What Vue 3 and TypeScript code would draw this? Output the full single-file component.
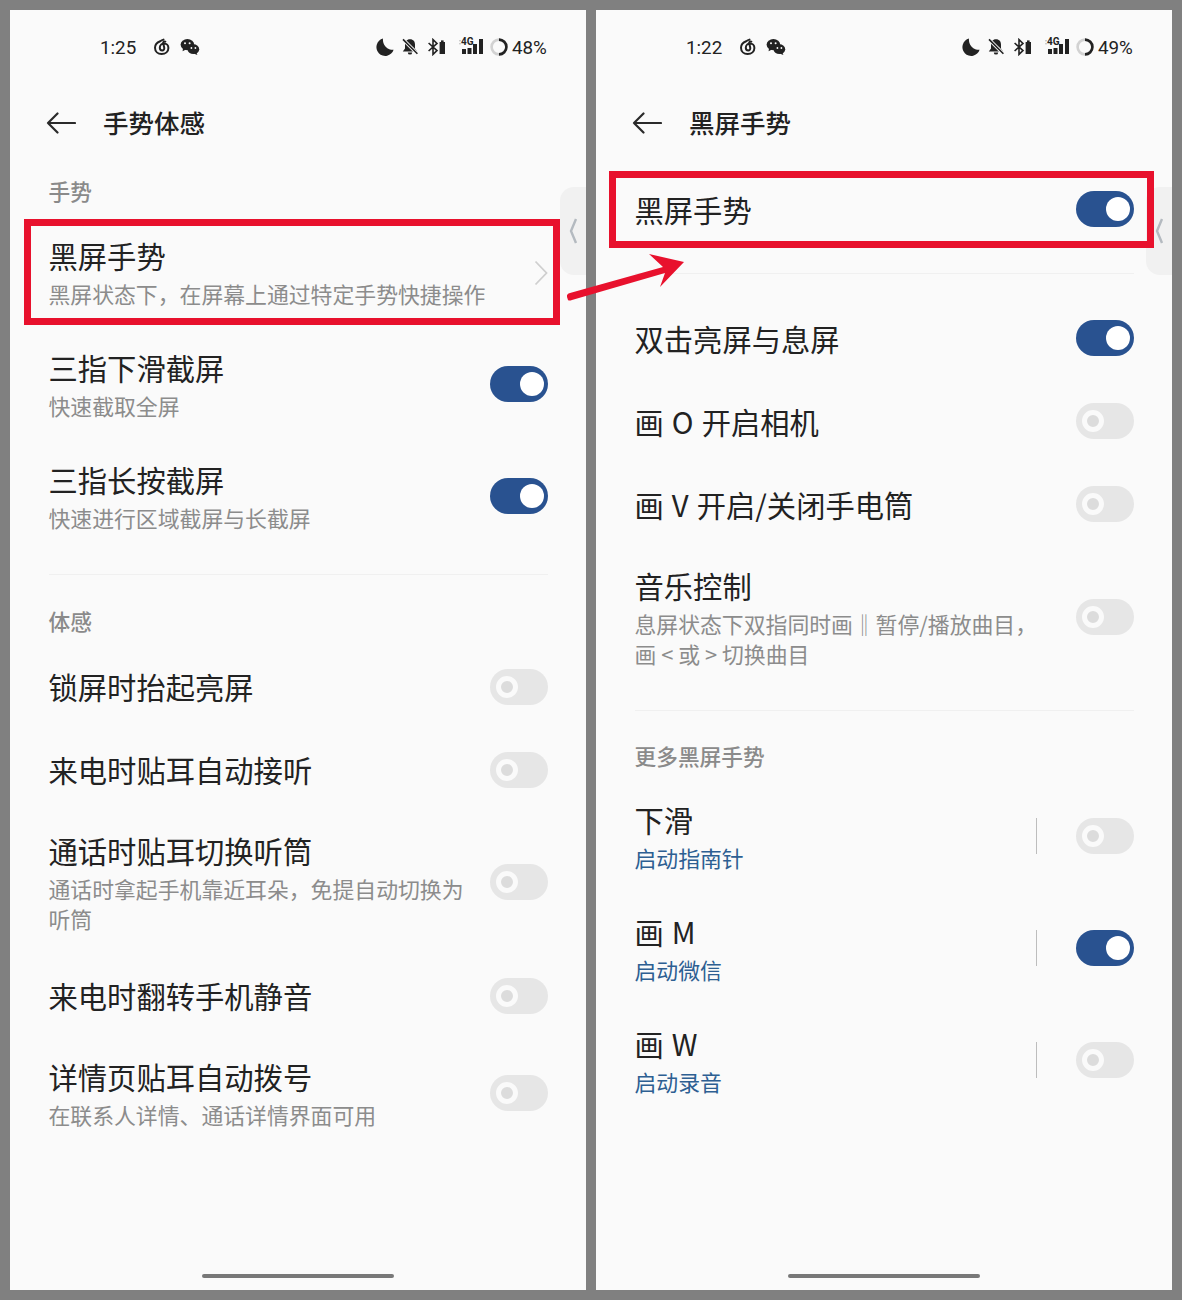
<script setup lang="ts">
interface Row {
  title: string
  sub?: string
  link?: string
  on?: boolean
  chevron?: boolean
  split?: boolean
  callout?: boolean
}
interface Section {
  label?: string
  rows: Row[]
  sep?: boolean
}
interface Panel {
  id: string
  time: string
  battery: string
  title: string
  sections: Section[]
}

const panels: Panel[] = [
  {
    id: 'left',
    time: '1:25',
    battery: '48%',
    title: '手势体感',
    sections: [
      {
        label: '手势',
        sep: true,
        rows: [
          { title: '黑屏手势', sub: '黑屏状态下，在屏幕上通过特定手势快捷操作', chevron: true, callout: true },
          { title: '三指下滑截屏', sub: '快速截取全屏', on: true },
          { title: '三指长按截屏', sub: '快速进行区域截屏与长截屏', on: true },
        ],
      },
      {
        label: '体感',
        rows: [
          { title: '锁屏时抬起亮屏' },
          { title: '来电时贴耳自动接听' },
          { title: '通话时贴耳切换听筒', sub: '通话时拿起手机靠近耳朵，免提自动切换为\n听筒' },
          { title: '来电时翻转手机静音' },
          { title: '详情页贴耳自动拨号', sub: '在联系人详情、通话详情界面可用' },
        ],
      },
    ],
  },
  {
    id: 'right',
    time: '1:22',
    battery: '49%',
    title: '黑屏手势',
    sections: [
      { sep: true, rows: [{ title: '黑屏手势', on: true, callout: true }] },
      {
        sep: true,
        rows: [
          { title: '双击亮屏与息屏', on: true },
          { title: '画 O 开启相机' },
          { title: '画 V 开启/关闭手电筒' },
          { title: '音乐控制', sub: '息屏状态下双指同时画 ‖ 暂停/播放曲目，\n画 < 或 > 切换曲目' },
        ],
      },
      {
        label: '更多黑屏手势',
        rows: [
          { title: '下滑', link: '启动指南针', split: true },
          { title: '画 M', link: '启动微信', split: true, on: true },
          { title: '画 W', link: '启动录音', split: true },
        ],
      },
    ],
  },
]

const isSingle = (r: Row): boolean => !r.sub && !r.link
</script>

<template>
  <div class="page">
    <section v-for="p in panels" :key="p.id" class="panel" :class="p.id">
      <div class="status">
        <span class="time">{{ p.time }}</span>
        <svg class="ic netease" width="18" height="18" viewBox="0 0 18 18" fill="none" stroke="#222" stroke-width="2" stroke-linecap="round">
          <path d="M10.5 1.6 C9 2 8 2.6 7.2 3.2 C3.8 4.4 2 6.8 2 9.8 C2 13.6 5 16 8.6 16 C12.6 16 15.4 13.4 15.4 10 C15.4 7.4 13.4 5.6 11.2 5.6 C8.8 5.6 6.8 7.4 6.8 9.8 C6.8 11.4 8 12.4 9.2 12.4 C10.6 12.4 11.6 11.2 11.2 9.6 L10.2 5.2 C10 4 10.8 3.2 12.4 3.6" />
        </svg>
        <svg class="ic wechat" width="20" height="18" viewBox="0 0 20 18" fill="#222">
          <ellipse cx="7.4" cy="6.6" rx="6.8" ry="5.6" />
          <path d="M3 10 L2.6 13.2 L6.4 11.2 Z" />
          <ellipse cx="13.4" cy="11.2" rx="5.8" ry="4.9" />
          <path d="M16.4 14.4 L17.4 17 L13.6 15.4 Z" />
          <circle cx="5" cy="5.2" r="1" fill="#fafafa" />
          <circle cx="9.6" cy="5.2" r="1" fill="#fafafa" />
          <circle cx="11.4" cy="10" r="0.9" fill="#fafafa" />
          <circle cx="15.4" cy="10" r="0.9" fill="#fafafa" />
        </svg>
        <span class="status-gap"></span>
        <svg class="ic moon" width="18" height="18" viewBox="0 0 18 18" fill="#222">
          <path d="M7 0.6 A8.8 8.8 0 1 0 17.6 11.8 A10 10 0 0 1 7 0.6 Z" />
        </svg>
        <svg class="ic bell" width="18" height="18" viewBox="0 0 18 18" fill="#222">
          <path d="M9 1.2 C5.6 1.2 4 3.6 4 6.6 V10.4 L1.8 13.4 H16.2 L14 10.4 V6.6 C14 3.6 12.4 1.2 9 1.2 Z" />
          <path d="M6.8 14.4 H11.2 A2.2 2.2 0 0 1 6.8 14.4 Z" />
          <path d="M2 1.4 L16.4 15.8" stroke="#fafafa" stroke-width="3.4" />
          <path d="M2 1.4 L16.4 15.8" stroke="#222" stroke-width="1.6" />
        </svg>
        <svg class="ic bt" width="20" height="18" viewBox="0 0 20 18" fill="none" stroke="#222" stroke-width="1.6">
          <path d="M1.6 5 L10 12.6 L6 16.4 V1.6 L10 5.4 L1.6 13" />
          <rect x="12.6" y="4" width="5.4" height="12" fill="#222" stroke="none" />
          <rect x="14" y="2.4" width="2.6" height="2" fill="#222" stroke="none" />
        </svg>
        <span class="signal">
          <svg width="26" height="20" viewBox="0 0 26 20" fill="#222">
            <rect x="0" y="3" width="2" height="1.4" fill="#ccc" />
            <rect x="0" y="6" width="2" height="1.4" fill="#ccc" />
            <rect x="3" y="12" width="4" height="5" />
            <rect x="8.5" y="11" width="4" height="6" />
            <rect x="14" y="7" width="4" height="10" />
            <rect x="20" y="2" width="4" height="15" />
          </svg>
          <b class="four-g">4G</b>
        </span>
        <svg class="ic ring" width="18" height="18" viewBox="0 0 18 18" fill="none" stroke-width="2.6">
          <circle cx="9" cy="9" r="7.4" stroke="#d2d2d2" />
          <path d="M9 1.6 A7.4 7.4 0 0 1 9 16.4" stroke="#222" />
        </svg>
        <span class="battery">{{ p.battery }}</span>
      </div>

      <header class="head">
        <svg width="30" height="24" viewBox="0 0 30 24" fill="none" stroke="#2a2a2a" stroke-width="2.2" stroke-linecap="round" stroke-linejoin="round">
          <path d="M29 12 H2 M11.5 2.5 L2 12 L11.5 21.5" />
        </svg>
        <h1>{{ p.title }}</h1>
      </header>

      <div class="scroll">
        <div v-for="(s, i) in p.sections" :key="i" class="group">
          <div v-if="s.label" class="label">{{ s.label }}</div>
          <div
            v-for="r in s.rows"
            :key="r.title"
            class="row"
            :class="{ single: isSingle(r) }"
          >
            <div class="text">
              <div class="title">{{ r.title }}</div>
              <div v-if="r.sub" class="sub">{{ r.sub }}</div>
              <div v-if="r.link" class="sub link">{{ r.link }}</div>
            </div>
            <svg v-if="r.chevron" class="chev" width="14" height="26" viewBox="0 0 14 26" fill="none" stroke="#cfcfcf" stroke-width="1.8">
              <path d="M1.5 1.5 L12.5 13 L1.5 24.5" />
            </svg>
            <template v-else>
              <span v-if="r.split" class="vbar"></span>
              <span class="toggle" :class="{ on: r.on }"><i></i></span>
            </template>
            <span v-if="r.callout" class="callout"></span>
          </div>
          <div v-if="s.sep" class="sep"></div>
        </div>
      </div>

      <div class="handle">
        <svg width="10" height="28" viewBox="0 0 10 28" fill="none" stroke="#b4bac0" stroke-width="2.4">
          <path d="M8 2 L3 14 L8 26" />
        </svg>
      </div>
      <div class="home"></div>
    </section>

    <svg class="arrow" width="130" height="60" viewBox="0 0 130 60">
      <path d="M7 50 Q4 44 9 43 L102 17 L88 4 L123 12 L99 37 L104 23 L11 50 Q8 51 7 50 Z" fill="#e8112d" />
    </svg>
  </div>
</template>

<style>
html,
body {
  margin: 0;
  background: #808080;
}
</style>

<style scoped>
.page {
  position: relative;
  box-sizing: border-box;
  width: 1182px;
  height: 1300px;
  padding: 10px;
  display: flex;
  gap: 10px;
  background: #808080;
  font-family: "Noto Sans CJK SC", "Noto Sans", sans-serif;
  color: #222;
}
.panel {
  position: relative;
  flex: 0 0 576px;
  height: 1280px;
  display: flex;
  flex-direction: column;
  background: #fafafa;
  overflow: visible;
}
.status {
  height: 74px;
  flex: none;
  display: flex;
  align-items: center;
  padding: 0 39px 0 90px;
  box-sizing: border-box;
  font-family: Roboto, "Noto Sans", sans-serif;
  font-size: 18.8px;
  color: #222;
}
.time {
  width: 37px;
  margin-top: 1px;
  white-space: nowrap;
}
.netease {
  margin-left: 16px;
}
.wechat {
  margin-left: 9px;
}
.status-gap {
  flex: 1;
}
.bell {
  margin-left: 7px;
}
.bt {
  margin-left: 8px;
}
.signal {
  position: relative;
  display: block;
  width: 26px;
  height: 20px;
  margin-left: 12px;
}
.signal svg {
  display: block;
}
.four-g {
  position: absolute;
  left: 2px;
  top: 0;
  font: 700 10px/10px Roboto, sans-serif;
  color: #222;
}
.ring {
  margin-left: 5px;
}
.battery {
  margin-left: 4px;
  margin-top: 1px;
  width: 35px;
  white-space: nowrap;
}
.head {
  height: 78px;
  flex: none;
  display: flex;
  align-items: center;
  padding-left: 36px;
}
.head svg {
  flex: none;
}
.head h1 {
  margin: 0 0 2px 27px;
  font-size: 25.5px;
  line-height: 36px;
  font-weight: 500;
  color: #222;
}
.right .scroll {
  padding-top: 7px;
}
.label {
  padding: 14px 38.5px 11px;
  font-size: 21.7px;
  line-height: 30px;
  font-weight: 500;
  color: #8a8a8a;
}
.left .group + .group .label {
  padding: 31px 38.5px 9px;
}
.right .group + .group .label {
  padding: 30px 38.5px 10px;
}
.row {
  position: relative;
  display: flex;
  align-items: center;
  padding: 20px 38px 20px 38.5px;
}
.left .row.single {
  padding: 22.75px 38px 22.75px 38.5px;
}
.right .row.single {
  padding: 21.5px 38px 23.5px 38.5px;
}
.text {
  flex: 1;
  min-width: 0;
}
.title {
  padding-bottom: 2px;
  font-size: 29.3px;
  line-height: 36px;
  word-spacing: 1.5px;
  color: #222;
}
.sub {
  margin-top: 4px;
  font-size: 21.85px;
  line-height: 30px;
  color: #8c8c8c;
  white-space: pre-line;
}
.sub::first-line {
  word-spacing: -4.5px;
}
.link {
  color: #2d5f92;
}
.chev {
  flex: none;
}
.vbar {
  flex: none;
  width: 1px;
  height: 36px;
  margin: -1px 39px 1px 0;
  background: #bdbdbd;
}
.toggle {
  flex: none;
  position: relative;
  width: 58px;
  height: 36px;
  margin: -1px 0 1px;
  border-radius: 18px;
  background: #e6e6e6;
}
.left .row.single .toggle {
  margin: 0;
}
.toggle i {
  position: absolute;
  left: 6px;
  top: 7px;
  box-sizing: border-box;
  width: 22px;
  height: 22px;
  border: 5px solid #fafafa;
  border-radius: 50%;
  background: #dcdcdc;
}
.toggle.on {
  background: #295290;
}
.toggle.on i {
  left: 30px;
  top: 6px;
  width: 24px;
  height: 24px;
  border: 0;
  background: #fff;
}
.sep {
  height: 1px;
  margin: 21px 38px 0 39px;
  background: #f0f0f0;
}
.right .group:first-child {
  margin-bottom: 24px;
}
.callout {
  position: absolute;
  box-sizing: border-box;
  border: 7px solid #e8112d;
  pointer-events: none;
  z-index: 3;
}
.left .callout {
  left: 14px;
  top: 2px;
  width: 536px;
  height: 106px;
}
.right .callout {
  left: 13px;
  top: 2px;
  width: 545px;
  height: 77px;
}
.handle {
  position: absolute;
  right: 0;
  top: 177px;
  width: 26px;
  height: 88px;
  display: flex;
  align-items: center;
  padding-left: 8px;
  box-sizing: border-box;
  background: #f1f1f1;
  border-radius: 14px 0 0 14px;
}
.home {
  position: absolute;
  left: 192px;
  bottom: 12px;
  width: 192px;
  height: 4px;
  border-radius: 2px;
  background: #787878;
}
.arrow {
  position: absolute;
  left: 561px;
  top: 250px;
  z-index: 4;
}
</style>
